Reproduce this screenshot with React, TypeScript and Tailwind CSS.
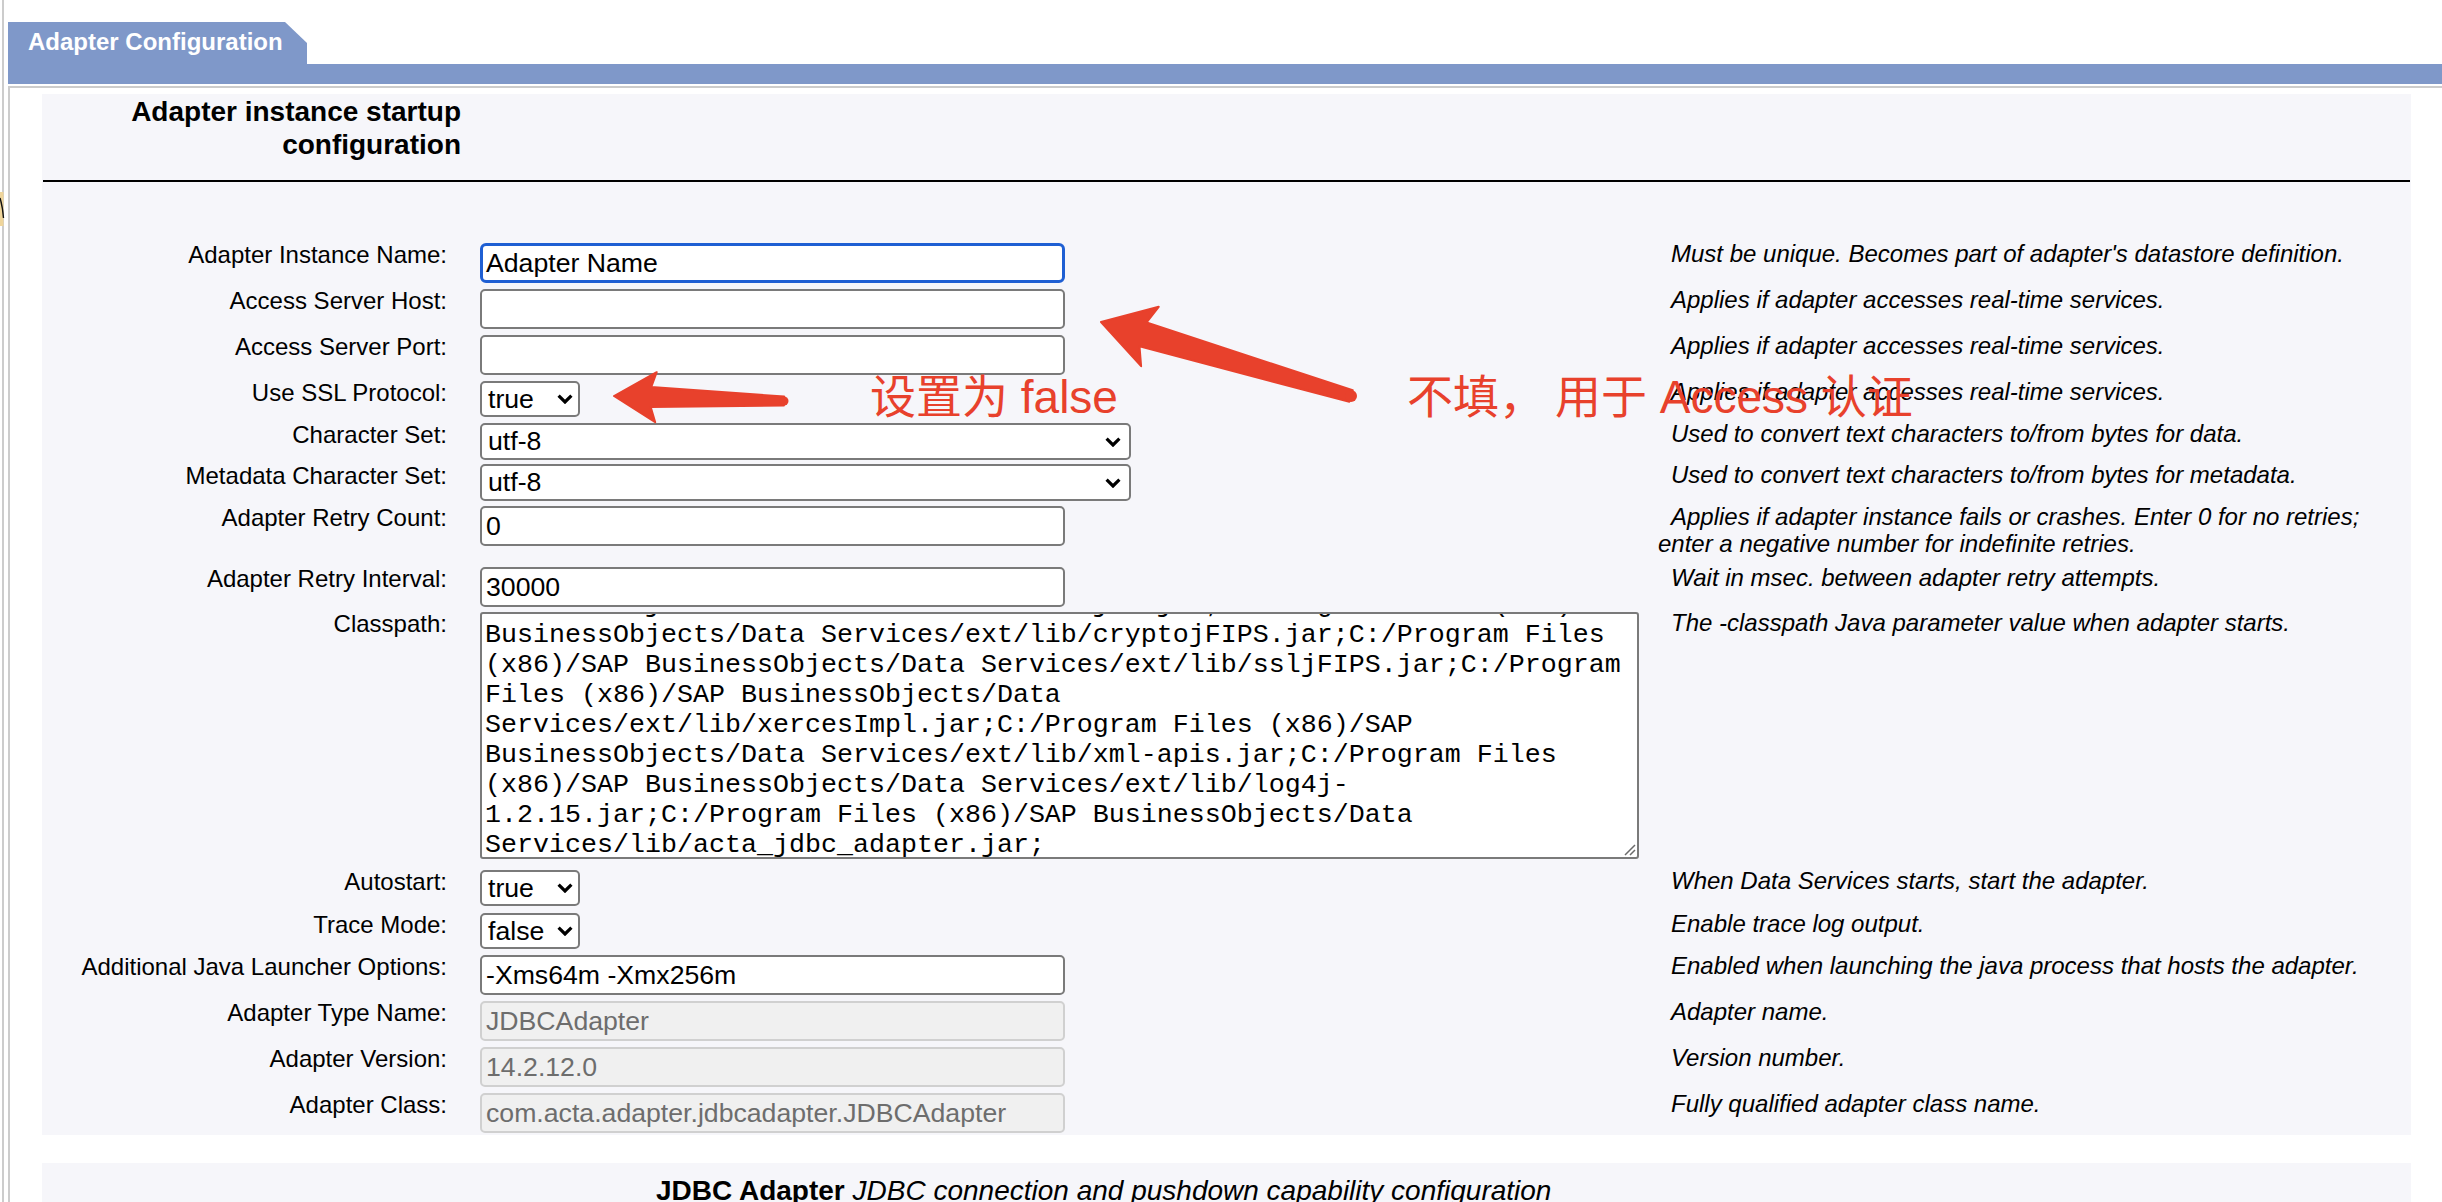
import React from 'react';

type Ctrl =
  | { kind: 'text'; value: string; focus?: boolean }
  | { kind: 'disabled'; value: string }
  | { kind: 'sel'; value: string }
  | { kind: 'wsel'; value: string }
  | { kind: 'area' };

interface Row {
  label: string;
  ctrl: Ctrl;
  desc: React.ReactNode;
  h: string;
}

const rows: Row[] = [
  { label: 'Adapter Instance Name:', ctrl: { kind: 'text', value: 'Adapter Name', focus: true }, desc: "Must be unique. Becomes part of adapter's datastore definition.", h: 'h-[46px]' },
  { label: 'Access Server Host:', ctrl: { kind: 'text', value: '' }, desc: 'Applies if adapter accesses real-time services.', h: 'h-[46px]' },
  { label: 'Access Server Port:', ctrl: { kind: 'text', value: '' }, desc: 'Applies if adapter accesses real-time services.', h: 'h-[46px]' },
  { label: 'Use SSL Protocol:', ctrl: { kind: 'sel', value: 'true' }, desc: 'Applies if adapter accesses real-time services.', h: 'h-[42px]' },
  { label: 'Character Set:', ctrl: { kind: 'wsel', value: 'utf-8' }, desc: 'Used to convert text characters to/from bytes for data.', h: 'h-[41px]' },
  { label: 'Metadata Character Set:', ctrl: { kind: 'wsel', value: 'utf-8' }, desc: 'Used to convert text characters to/from bytes for metadata.', h: 'h-[42px]' },
  {
    label: 'Adapter Retry Count:',
    ctrl: { kind: 'text', value: '0' },
    desc: (
      <>
        Applies if adapter instance fails or crashes. Enter 0 for no retries;
        <br />
        enter a negative number for indefinite retries.
      </>
    ),
    h: 'h-[61px]',
  },
  { label: 'Adapter Retry Interval:', ctrl: { kind: 'text', value: '30000' }, desc: 'Wait in msec. between adapter retry attempts.', h: 'h-[45px]' },
  { label: 'Classpath:', ctrl: { kind: 'area' }, desc: 'The -classpath Java parameter value when adapter starts.', h: 'h-[258px]' },
  { label: 'Autostart:', ctrl: { kind: 'sel', value: 'true' }, desc: 'When Data Services starts, start the adapter.', h: 'h-[43px]' },
  { label: 'Trace Mode:', ctrl: { kind: 'sel', value: 'false' }, desc: 'Enable trace log output.', h: 'h-[42px]' },
  { label: 'Additional Java Launcher Options:', ctrl: { kind: 'text', value: '-Xms64m -Xmx256m' }, desc: 'Enabled when launching the java process that hosts the adapter.', h: 'h-[46px]' },
  { label: 'Adapter Type Name:', ctrl: { kind: 'disabled', value: 'JDBCAdapter' }, desc: 'Adapter name.', h: 'h-[46px]' },
  { label: 'Adapter Version:', ctrl: { kind: 'disabled', value: '14.2.12.0' }, desc: 'Version number.', h: 'h-[46px]' },
  { label: 'Adapter Class:', ctrl: { kind: 'disabled', value: 'com.acta.adapter.jdbcadapter.JDBCAdapter' }, desc: 'Fully qualified adapter class name.', h: 'h-[44px]' },
];

const areaLines = [
  'BusinessObjects/Data Services/ext/lib/jcm.jar;C:/Program Files (x86)/SAP',
  'BusinessObjects/Data Services/ext/lib/cryptojFIPS.jar;C:/Program Files',
  '(x86)/SAP BusinessObjects/Data Services/ext/lib/ssljFIPS.jar;C:/Program',
  'Files (x86)/SAP BusinessObjects/Data',
  'Services/ext/lib/xercesImpl.jar;C:/Program Files (x86)/SAP',
  'BusinessObjects/Data Services/ext/lib/xml-apis.jar;C:/Program Files',
  '(x86)/SAP BusinessObjects/Data Services/ext/lib/log4j-',
  '1.2.15.jar;C:/Program Files (x86)/SAP BusinessObjects/Data',
  'Services/lib/acta_jdbc_adapter.jar;',
];

function Chevron() {
  return (
    <svg width="16" height="10" viewBox="0 0 16 10" className="shrink-0">
      <path d="M1.6 1.6 L8 8 L14.4 1.6" fill="none" stroke="#000" strokeWidth="3.2" strokeLinejoin="miter" />
    </svg>
  );
}

function Control({ c }: { c: Ctrl }) {
  switch (c.kind) {
    case 'text':
      return c.focus ? (
        <div className="mt-[2px] flex h-[40px] w-[585px] items-center rounded-[6px] border-[3px] border-[#1f5fd3] bg-white pl-[3px] text-[26.67px] text-black">
          {c.value}
        </div>
      ) : (
        <div className="mt-[2px] flex h-[40px] w-[585px] items-center rounded-[5px] border-2 border-[#7a7a7a] bg-white pl-[4px] text-[26.67px] text-black">
          {c.value}
        </div>
      );
    case 'disabled':
      return (
        <div className="mt-[2px] flex h-[40px] w-[585px] items-center rounded-[5px] border-2 border-[#d0d0d0] bg-[#f0f0f0] pl-[4px] text-[26.67px] text-[#6d6d6d]">
          {c.value}
        </div>
      );
    case 'sel':
      return (
        <div className="mt-[2px] flex h-[36px] w-[100px] items-center justify-between rounded-[5px] border-2 border-[#7a7a7a] bg-white pl-[6px] pr-[5px] text-[26.67px] text-black">
          <span>{c.value}</span>
          <Chevron />
        </div>
      );
    case 'wsel':
      return (
        <div className="mt-[2px] flex h-[37px] w-[651px] items-center justify-between rounded-[5px] border-2 border-[#7a7a7a] bg-white pl-[6px] pr-[8px] text-[26.67px] text-black">
          <span>{c.value}</span>
          <Chevron />
        </div>
      );
    case 'area':
      return (
        <div className="relative mt-[2px] h-[247px] w-[1159px] overflow-hidden rounded-[3px] border-2 border-[#7a7a7a] bg-white pl-[3px]">
          <div className="mt-[-24px] font-['Liberation_Mono','Courier_New',monospace] text-[26.67px] leading-[30px] text-black">
            {areaLines.map((l, i) => (
              <div key={i} className="whitespace-pre">
                {l}
              </div>
            ))}
          </div>
          <svg width="14" height="14" viewBox="0 0 14 14" className="absolute bottom-[1px] right-[1px]">
            <path d="M13 3 L3 13 M13 8 L8 13" stroke="#6b6b6b" strokeWidth="1.5" fill="none" />
          </svg>
        </div>
      );
  }
}

function arrow(tx: number, ty: number, ex: number, ey: number, L: number, W: number, wh: number, wt: number, notch: number) {
  const dx = ex - tx;
  const dy = ey - ty;
  const len = Math.hypot(dx, dy);
  const ux = dx / len;
  const uy = dy / len;
  const nx = -uy;
  const ny = ux;
  const p = (a: number, b: number) => `${(tx + ux * a + nx * b).toFixed(1)},${(ty + uy * a + ny * b).toFixed(1)}`;
  return [p(0, 0), p(L, W), p(L * notch, wh / 2), p(len, wt / 2), p(len, -wt / 2), p(L * notch, -wh / 2), p(L, -W)].join(' ');
}

export default function App() {
  const red = '#e8412c';
  return (
    <div className="relative h-[1202px] w-[2442px] overflow-hidden bg-white font-['Liberation_Sans',Arial,sans-serif] leading-[normal] text-black">
      <div className="ml-[2px] h-full border-l-2 border-[#cccccc] pl-[4px] pt-[22px]">
        {/* tab */}
        <div className="flex h-[42px] w-[299px] items-start bg-[#7f98c9] pl-[20px] pt-[6px] text-[24px] font-bold text-white [clip-path:polygon(0_0,277px_0,299px_21px,299px_100%,0_100%)]">
          Adapter Configuration
        </div>
        {/* bar */}
        <div className="h-[20px] bg-[#7f98c9]" />
        <div className="h-[2px] bg-white" />
        {/* content box */}
        <div className="h-full border-l-2 border-t-2 border-[#cccccc]">
          <div className="ml-[32px] mt-[6px] w-[2369px] bg-[#f6f6fa]">
            <div className="w-[419px] pt-[1px] text-right text-[28px] font-bold leading-[33px]">
              Adapter instance startup
              <br />
              configuration
            </div>
            <div className="mx-[1px] mt-[19px] h-[2px] bg-black" />
            <div className="mt-[59px] flex flex-col">
              {rows.map((r, i) => (
                <div key={i} className={`grid grid-cols-[422px_1178px_1fr] items-start ${r.h}`}>
                  <div className="pr-[17px] text-right text-[24px] whitespace-nowrap">{r.label}</div>
                  <div className="pl-[16px]">
                    <Control c={r.ctrl} />
                  </div>
                  <div className="pl-[16px] indent-[13px] text-[24px] leading-[26.5px] italic">{r.desc}</div>
                </div>
              ))}
            </div>
          </div>
          <div className="ml-[32px] mt-[28px] h-[60px] w-[2369px] bg-[#f6f6fa] pl-[614px] pt-[12px] text-[28px] leading-[32px] whitespace-nowrap">
            <span className="font-bold">JDBC Adapter</span> <span className="italic">JDBC connection and pushdown capability configuration</span>
          </div>
        </div>
      </div>

      {/* small clipped item at left edge */}
      <svg width="5" height="34" viewBox="0 0 5 34" className="absolute left-0 top-[192px]">
        <rect x="0" y="0" width="3.5" height="34" fill="#efd59b" />
        <path d="M0 6 Q2.5 14 3.5 26" stroke="#111" strokeWidth="1.4" fill="none" />
      </svg>

      {/* annotations */}
      <svg width="2442" height="1202" viewBox="0 0 2442 1202" className="pointer-events-none absolute left-0 top-0">
        <polygon points={arrow(614, 396, 784, 401, 42, 25, 20, 9, 0.88)} fill={red} stroke={red} strokeWidth="2" strokeLinejoin="round" />
        <circle cx="784" cy="401" r="4.5" fill={red} />
        <polygon points={arrow(1101, 322, 1351, 396, 51, 31, 25, 12, 0.86)} fill={red} stroke={red} strokeWidth="2" strokeLinejoin="round" />
        <circle cx="1351" cy="396" r="6" fill={red} />
      </svg>
      <div className="pointer-events-none absolute left-[870px] top-[374px] whitespace-nowrap font-['Liberation_Sans','Noto_Sans_CJK_SC',sans-serif] text-[46px] leading-[46px] text-[#e8412c]">
        设置为 false
      </div>
      <div className="pointer-events-none absolute left-[1407px] top-[374px] flex whitespace-nowrap font-['Liberation_Sans','Noto_Sans_CJK_SC',sans-serif] text-[46px] leading-[46px] text-[#e8412c]">
        <span>不填，</span>
        <span className="ml-[10px]">用于 Access 认证</span>
      </div>
    </div>
  );
}
